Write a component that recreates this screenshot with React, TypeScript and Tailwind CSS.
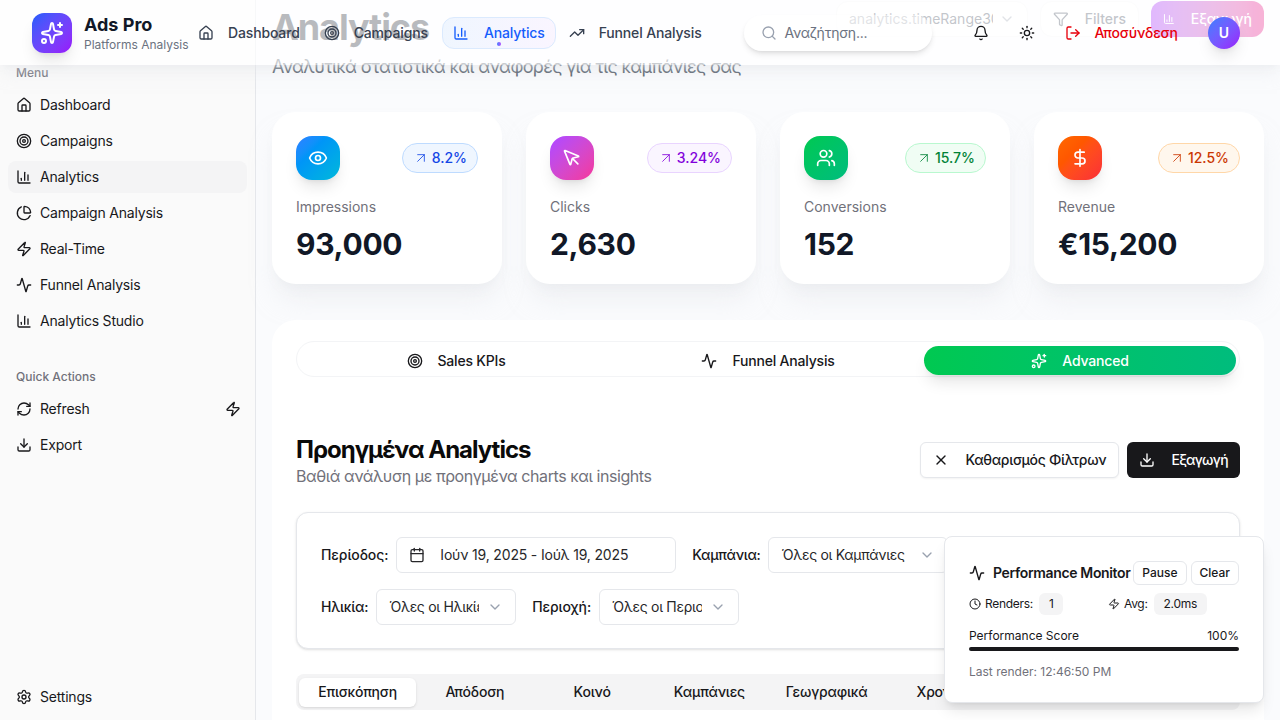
import type { LucideIcon } from 'lucide-react'
import {
  Activity,
  ArrowUpRight,
  Bell,
  Calendar,
  ChartColumn,
  ChartPie,
  ChevronDown,
  Clock,
  DollarSign,
  Download,
  Eye,
  Funnel,
  House,
  LogOut,
  MousePointer,
  RefreshCw,
  Search,
  Settings,
  Sparkles,
  Sun,
  Target,
  TrendingUp,
  Users,
  X,
  Zap,
} from 'lucide-react'

const menuItems: { icon: LucideIcon; label: string; active?: boolean }[] = [
  { icon: House, label: 'Dashboard' },
  { icon: Target, label: 'Campaigns' },
  { icon: ChartColumn, label: 'Analytics', active: true },
  { icon: ChartPie, label: 'Campaign Analysis' },
  { icon: Zap, label: 'Real-Time' },
  { icon: Activity, label: 'Funnel Analysis' },
  { icon: ChartColumn, label: 'Analytics Studio' },
]

const stats = [
  {
    icon: Eye,
    iconBg: 'from-blue-500 to-cyan-500',
    badge: 'border-blue-200 bg-blue-50 text-blue-700',
    change: '8.2%',
    label: 'Impressions',
    value: '93,000',
  },
  {
    icon: MousePointer,
    iconBg: 'from-purple-500 to-pink-500',
    badge: 'border-purple-200 bg-purple-50 text-purple-700',
    change: '3.24%',
    label: 'Clicks',
    value: '2,630',
  },
  {
    icon: Users,
    iconBg: 'from-green-500 to-emerald-500',
    badge: 'border-green-200 bg-green-50 text-green-700',
    change: '15.7%',
    label: 'Conversions',
    value: '152',
  },
  {
    icon: DollarSign,
    iconBg: 'from-orange-500 to-red-500',
    badge: 'border-orange-200 bg-orange-50 text-orange-700',
    change: '12.5%',
    label: 'Revenue',
    value: '€15,200',
  },
]

const detailTabs = ['Επισκόπηση', 'Απόδοση', 'Κοινό', 'Καμπάνιες', 'Γεωγραφικά', 'Χρονικά', 'Συσκευές', 'Insights']

export default function App() {
  return (
    <div className="relative flex h-[720px] w-[1280px] overflow-hidden bg-[#fafbfd] font-['Inter',sans-serif] text-[#18181b]">
      <Sidebar />

      {/* Page content, scrolled slightly under the header */}
      <main className="flex min-w-0 flex-1 flex-col px-4 pt-px">
        <div className="flex items-start justify-between">
          <div>
            <h1 className="mt-1.5 text-4xl font-bold tracking-[-1.1px] text-[#111827]">Analytics</h1>
            <p className="mt-1.5 text-lg tracking-[-0.67px] text-[#4b5563]">Αναλυτικά στατιστικά και αναφορές για τις καμπάνιες σας</p>
          </div>
          <div className="flex items-center gap-3">
            <div className="flex h-9 w-[192px] items-center justify-between rounded-xl border border-gray-100 bg-white px-3 text-sm text-gray-700">
              <span className="w-[144px] overflow-hidden whitespace-nowrap">analytics.timeRange30d</span>
              <ChevronDown className="h-4 w-4 text-gray-400" />
            </div>
            <div className="flex h-9 w-[99px] items-center gap-4 rounded-xl border border-gray-100 bg-white px-3 text-sm font-medium text-gray-700">
              <Funnel className="h-4 w-4" />
              Filters
            </div>
            <div className="flex h-9 w-[113px] items-center gap-4 rounded-xl bg-gradient-to-r from-purple-600 to-pink-600 px-3 text-sm font-medium text-white">
              <ChartColumn className="h-4 w-4" />
              Εξαγωγή
            </div>
          </div>
        </div>

        {/* Stat cards */}
        <div className="mt-[31px] grid grid-cols-4 gap-6">
          {stats.map(({ icon: Icon, iconBg, badge, change, label, value }) => (
            <div key={label} className="rounded-3xl bg-white p-6 pb-[22px] shadow-xl shadow-gray-200/50">
              <div className="flex items-center justify-between">
                <span className={`flex h-11 w-11 items-center justify-center rounded-2xl bg-gradient-to-br shadow-lg ${iconBg}`}>
                  <Icon className="h-5 w-5 text-white" />
                </span>
                <span className={`flex items-center gap-[3px] rounded-full border px-2.5 py-1 text-sm font-medium ${badge}`}>
                  <ArrowUpRight className="h-4 w-4" strokeWidth={1.25} />
                  {change}
                </span>
              </div>
              <p className="mt-[17px] text-sm text-[#71717a]">{label}</p>
              <p className="mt-[9px] text-3xl font-bold tracking-[-0.3px] text-[#111827]">{value}</p>
            </div>
          ))}
        </div>

        {/* Main panel */}
        <section className="mt-9 flex-1 rounded-t-3xl bg-white px-6 pt-[21px]">
          <div className="grid h-9 grid-cols-3 items-start rounded-full border border-gray-100 bg-white px-[3px] pt-1 text-sm font-medium tracking-[-0.2px]">
            <div className="flex h-[29px] items-center justify-center gap-[15px]">
              <Target className="h-4 w-4" />
              Sales KPIs
            </div>
            <div className="flex h-[29px] items-center justify-center gap-[15px]">
              <Activity className="h-4 w-4" />
              Funnel Analysis
            </div>
            <div className="flex h-[29px] items-center justify-center gap-[15px] rounded-full bg-gradient-to-r from-green-500 to-emerald-500 text-white shadow-lg">
              <Sparkles className="h-4 w-4" />
              Advanced
            </div>
          </div>

          <div className="mt-[57px] flex items-start justify-between">
            <div>
              <h2 className="text-2xl font-bold tracking-[-1px] text-[#0a0a0a]">Προηγμένα Analytics</h2>
              <p className="-mt-[2px] text-base tracking-[-0.43px] text-[#71717a]">Βαθιά ανάλυση με προηγμένα charts και insights</p>
            </div>
            <div className="mt-2 flex items-center gap-2 text-sm font-medium">
              <button className="flex h-9 items-center gap-4 rounded-md border border-gray-200 bg-white px-3 tracking-[-0.3px] shadow-xs">
                <X className="h-4 w-4" />
                Καθαρισμός Φίλτρων
              </button>
              <button className="flex h-9 items-center gap-4 rounded-md bg-[#18181b] px-3 tracking-[-0.65px] text-white">
                <Download className="h-4 w-4" />
                Εξαγωγή
              </button>
            </div>
          </div>

          {/* Filters */}
          <div className="mt-6 flex flex-col gap-4 rounded-xl border border-gray-200 bg-white p-6 pb-[23px] shadow-sm">
            <div className="flex items-center gap-4">
              <Field label="Περίοδος:" tracking="tracking-[-0.1px]">
                <div className="flex h-9 w-[280px] items-center gap-[15px] rounded-md border border-gray-200 bg-white px-3 text-sm tracking-[-0.17px] text-[#27272a]">
                  <Calendar className="h-4 w-4" />
                  Ιούν 19, 2025 - Ιούλ 19, 2025
                </div>
              </Field>
              <Field label="Καμπάνια:" tracking="tracking-[-0.3px]">
                <SelectBox value="Όλες οι Καμπάνιες" width="w-[180px]" />
              </Field>
            </div>
            <div className="flex items-center gap-4">
              <Field label="Ηλικία:" tracking="tracking-[-0.25px]">
                <SelectBox value="Όλες οι Ηλικίες" width="w-[140px]" />
              </Field>
              <Field label="Περιοχή:" tracking="tracking-[-0.1px]">
                <SelectBox value="Όλες οι Περιοχές" width="w-[140px]" />
              </Field>
            </div>
          </div>

          <div className="mt-[25px] grid h-9 grid-cols-8 items-center rounded-lg bg-[#f4f4f5] px-[3px] text-sm font-medium tracking-[-0.2px]">
            {detailTabs.map((tab, i) => (
              <div
                key={tab}
                className={`flex h-[29px] items-center justify-center rounded-md ${i === 0 ? 'bg-white shadow-sm' : ''}`}
              >
                {tab}
              </div>
            ))}
          </div>
        </section>
      </main>

      <Header />
      <PerformanceMonitor />
    </div>
  )
}

function Header() {
  return (
    <header className="absolute inset-x-0 top-0 z-20 flex h-[65px] items-center bg-white/70 pl-8 pr-10 shadow-lg shadow-gray-200/50">
      <span className="flex h-10 w-10 items-center justify-center rounded-xl bg-gradient-to-br from-blue-600 to-purple-600 shadow-lg">
        <Sparkles className="h-6 w-6 text-white" />
      </span>
      <div className="ml-3 w-[102px]">
        <p className="text-lg leading-6 font-bold text-[#111827]">Ads Pro</p>
        <p className="text-xs whitespace-nowrap text-[#6b7280]">Platforms Analysis</p>
      </div>

      <nav className="flex items-center text-sm font-medium tracking-[-0.15px] text-[#374151]">
        <NavItem icon={House} label="Dashboard" />
        <NavItem icon={Target} label="Campaigns" />
        <div className="relative ml-0.5 flex h-8 items-center gap-[15px] rounded-xl border border-blue-100 bg-gradient-to-r from-blue-50 to-purple-50 px-[10px] text-blue-600">
          <ChartColumn className="h-4 w-4" />
          Analytics
          <span className="absolute bottom-[2px] left-1/2 h-1 w-1 -translate-x-1/2 rounded-full bg-gradient-to-r from-blue-500 to-purple-500" />
        </div>
        <div className="ml-px">
          <NavItem icon={TrendingUp} label="Funnel Analysis" />
        </div>
      </nav>

      <div className="ml-[30px] flex h-9 w-[188px] items-center gap-2 rounded-full bg-white/50 pl-[17px] text-sm tracking-[-0.25px] text-[#6b7280] shadow-md">
        <Search className="h-4 w-4 text-gray-400" />
        Αναζήτηση...
      </div>

      <Bell className="ml-[41px] h-4 w-4" />
      <Sun className="ml-[30px] h-4 w-4" />
      <LogOut className="ml-[30px] h-4 w-4 text-[#e7000b]" />
      <span className="ml-[14px] text-sm font-medium tracking-[-0.2px] text-[#e7000b]">Αποσύνδεση</span>
      <span className="ml-auto flex h-8 w-8 items-center justify-center rounded-full bg-gradient-to-br from-blue-500 to-purple-600 text-sm font-semibold text-white shadow-lg">
        U
      </span>
    </header>
  )
}

function NavItem({ icon: Icon, label }: { icon: LucideIcon; label: string }) {
  return (
    <div className="flex h-8 items-center gap-3.5 px-3 whitespace-nowrap">
      <Icon className="h-4 w-4" />
      {label}
    </div>
  )
}

function Sidebar() {
  return (
    <aside className="flex h-full w-[256px] shrink-0 flex-col border-r border-gray-200 bg-[#fafafa] px-2 pt-[65px] pb-[7px] text-sm tracking-[-0.2px]">
      <p className="px-2 text-xs leading-4 font-medium tracking-normal text-[#71717a]">Menu</p>
      <div className="mt-2 flex flex-col gap-1">
        {menuItems.map(item => (
          <SidebarRow key={item.label} icon={item.icon} label={item.label} active={item.active} />
        ))}
      </div>

      <p className="mt-8 px-2 text-xs leading-4 font-medium tracking-normal text-[#71717a]">Quick Actions</p>
      <div className="mt-2 flex flex-col gap-1">
        <div className="relative">
          <SidebarRow icon={RefreshCw} label="Refresh" />
          <Zap className="absolute top-2 right-1.5 h-4 w-4" />
        </div>
        <SidebarRow icon={Download} label="Export" />
      </div>

      <div className="mt-auto">
        <SidebarRow icon={Settings} label="Settings" />
      </div>
    </aside>
  )
}

function SidebarRow({ icon: Icon, label, active }: { icon: LucideIcon; label: string; active?: boolean }) {
  return (
    <div className={`flex h-8 items-center gap-2 rounded-lg px-2 ${active ? 'bg-[#f4f4f5]' : ''}`}>
      <Icon className="h-4 w-4" />
      {label}
    </div>
  )
}

function Field({ label, tracking, children }: { label: string; tracking: string; children: React.ReactNode }) {
  return (
    <div className="flex items-center gap-2">
      <span className={`text-sm font-medium ${tracking}`}>{label}</span>
      {children}
    </div>
  )
}

function SelectBox({ value, width }: { value: string; width: string }) {
  return (
    <div className={`flex h-9 items-center justify-between rounded-md border border-gray-200 bg-white px-3 text-sm tracking-[-0.3px] text-[#27272a] ${width}`}>
      <span className="min-w-0 flex-1 overflow-hidden whitespace-nowrap">{value}</span>
      <ChevronDown className="ml-2 h-4 w-4 shrink-0 text-gray-400" />
    </div>
  )
}

function PerformanceMonitor() {
  return (
    <div className="absolute right-4 bottom-[17px] z-30 w-80 rounded-lg border border-gray-200 bg-white p-6 pb-[22px] shadow-lg">
      <div className="flex items-center justify-between">
        <div className="flex items-center gap-2 text-sm font-semibold tracking-[-0.35px] whitespace-nowrap">
          <Activity className="h-4 w-4" />
          Performance Monitor
        </div>
        <div className="flex gap-1 text-xs font-medium">
          <span className="flex h-6 items-center rounded-md border border-gray-200 px-2">Pause</span>
          <span className="flex h-6 items-center rounded-md border border-gray-200 px-2">Clear</span>
        </div>
      </div>
      <div className="mt-2 grid grid-cols-2 gap-2 text-xs tracking-[-0.3px]">
        <div className="flex items-center gap-1">
          <Clock className="h-3 w-3" />
          Renders:
          <span className="ml-0.5 rounded-md bg-[#f4f4f5] px-2.5 py-[3px]">1</span>
        </div>
        <div className="flex items-center gap-1">
          <Zap className="h-3 w-3" />
          Avg:
          <span className="ml-0.5 rounded-md bg-[#f4f4f5] px-2.5 py-[3px]">2.0ms</span>
        </div>
      </div>
      <div className="mt-[13px] flex justify-between text-xs">
        <span>Performance Score</span>
        <span>100%</span>
      </div>
      <div className="mt-[3px] h-1 rounded-full bg-[#18181b]" />
      <p className="mt-[13px] text-xs text-[#71717a]">Last render: 12:46:50 PM</p>
    </div>
  )
}
